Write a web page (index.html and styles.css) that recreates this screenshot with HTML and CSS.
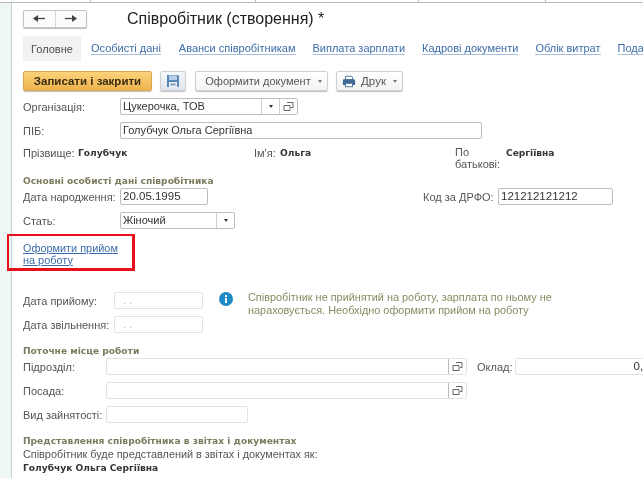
FILE: index.html
```html
<!DOCTYPE html>
<html lang="uk">
<head>
<meta charset="utf-8">
<title>Співробітник (створення)</title>
<link rel="stylesheet" href="styles.css">
</head>
<body>
<div class="top-strip"><i class="t1"></i><i class="t2"></i><i class="t3"></i><i class="t4"></i></div>
<div class="frame">
  <aside class="side"></aside>
  <main class="form">
    <header class="head">
      <div class="nav">
        <button class="nav-btn"><svg width="12" height="9" viewBox="0 0 12 9"><path d="M1 4.500h11" stroke="#444" stroke-width="1.300"/><path d="M0 4.500L5 1v7z" fill="#444"/></svg></button>
        <button class="nav-btn"><svg width="12" height="9" viewBox="0 0 12 9"><path d="M0 4.500h11" stroke="#444" stroke-width="1.300"/><path d="M12 4.500L7 1v7z" fill="#444"/></svg></button>
      </div>
      <h1 class="title">Співробітник (створення) *</h1>
    </header>
    <nav class="tabs">
      <span class="tab active">Головне</span>
      <a class="tab t-a">Особисті дані</a>
      <a class="tab t-b">Аванси співробітникам</a>
      <a class="tab t-c">Виплата зарплати</a>
      <a class="tab t-d">Кадрові документи</a>
      <a class="tab t-e">Облік витрат</a>
      <a class="tab">Подання</a>
    </nav>
    <div class="toolbar">
      <button class="btn primary">Записати і закрити</button>
      <button class="btn save"><svg width="14" height="14" viewBox="0 0 14 14"><path d="M1 1h11l1 1v11H1z" fill="#5a86b8"/><rect x="3" y="1.500" width="8" height="4.500" fill="#b9cfe6"/><rect x="3" y="8" width="8" height="5" fill="#e8eef4"/><rect x="4.500" y="9.500" width="5" height="2" fill="#7d9cbc"/></svg></button>
      <button class="btn doc">Оформити документ<span class="caret"></span></button>
      <button class="btn print"><svg width="14" height="13" viewBox="0 0 16 14"><path d="M4 1h7l1 1v3H4z" fill="#fff" stroke="#3e6a94"/><path d="M1 6q0-1.500 1.500-1.500h11Q15 4.500 15 6v5H1z" fill="#3e6a94"/><rect x="4" y="9" width="8" height="4" fill="#fff" stroke="#3e6a94"/></svg>Друк<span class="caret"></span></button>
    </div>

    <div class="row r-org">
      <label class="lbl w97">Організація:</label>
      <div class="field f-org"><span class="val">Цукерочка, ТОВ</span><span class="cell"><span class="caret dark"></span></span><span class="cell"><svg class="open" width="11" height="11" viewBox="0 0 11 11"><path d="M4 1.500h6v5H8M1 4.500h6v5H1z" fill="none" stroke="#666"/></svg></span></div>
    </div>
    <div class="row r-pib">
      <label class="lbl w97">ПІБ:</label>
      <div class="field f-pib"><span class="val">Голубчук Ольга Сергіївна</span></div>
    </div>
    <div class="names">
      <span class="lbl">Прізвище:</span><b class="bold">Голубчук</b>
      <span class="lbl">Ім'я:</span><b class="bold">Ольга</b>
      <span class="lbl n4">По батькові:</span><b class="bold">Сергіївна</b>
    </div>

    <h2 class="group g1">Основні особисті дані співробітника</h2>
    <div class="row r-birth">
      <label class="lbl w97">Дата народження:</label>
      <div class="field f-birth"><span class="val num">20.05.1995</span></div>
      <label class="lbl code">Код за ДРФО:</label>
      <div class="field f-code"><span class="val num">121212121212</span></div>
    </div>
    <div class="row r-sex">
      <label class="lbl w97">Стать:</label>
      <div class="field f-sex"><span class="val">Жіночий</span><span class="cell"><span class="caret dark"></span></span></div>
    </div>
    <div class="hire-box"><a class="hire">Оформити прийом<br>на роботу</a></div>

    <div class="dates">
      <div class="date-col">
        <div class="row"><label class="lbl w91">Дата прийому:</label><div class="field soft f-date"><span class="val dim">. .</span></div></div>
        <div class="row r-dis"><label class="lbl w91">Дата звільнення:</label><div class="field soft f-date"><span class="val dim">. .</span></div></div>
      </div>
      <svg class="info" width="14" height="14" viewBox="0 0 14 14"><circle cx="7" cy="7" r="7" fill="#1f8ac4"/><rect x="6" y="6" width="2" height="5" fill="#fff"/><rect x="6" y="3" width="2" height="2" fill="#fff"/></svg>
      <p class="note">Співробітник не прийнятий на роботу, зарплата по ньому не нараховується. Необхідно оформити прийом на роботу</p>
    </div>

    <h2 class="group g2">Поточне місце роботи</h2>
    <div class="row">
      <label class="lbl w83">Підрозділ:</label>
      <div class="field soft f-pos"><span class="val"></span><span class="cell soft-cell"><svg class="open" width="11" height="11" viewBox="0 0 11 11"><path d="M4 1.500h6v5H8M1 4.500h6v5H1z" fill="none" stroke="#666"/></svg></span></div>
      <label class="lbl salary">Оклад:</label>
      <div class="field soft f-sal"><span class="val right num">0,00</span></div>
    </div>
    <div class="row r-post">
      <label class="lbl w83">Посада:</label>
      <div class="field soft f-pos"><span class="val"></span><span class="cell soft-cell"><svg class="open" width="11" height="11" viewBox="0 0 11 11"><path d="M4 1.500h6v5H8M1 4.500h6v5H1z" fill="none" stroke="#666"/></svg></span></div>
    </div>
    <div class="row r-post">
      <label class="lbl w83">Вид зайнятості:</label>
      <div class="field soft f-emp"></div>
    </div>

    <h2 class="group g3">Представлення співробітника в звітах і документах</h2>
    <p class="lbl present">Співробітник буде представлений в звітах і документах як:</p>
    <b class="bold full">Голубчук Ольга Сергіївна</b>
  </main>
</div>
</body>
</html>
```
FILE: styles.css
```css
* { box-sizing: border-box; }
html, body { margin: 0; padding: 0; }
body {
  width: 643px;
  height: 478px;
  overflow: hidden;
  background: #fff;
  font-family: "Liberation Sans", Arial, sans-serif;
  font-size: 11px;
  color: #4a4a4a;
  filter: blur(0.35px);
}
button { font-family: inherit; padding: 0; margin: 0; }

.top-strip { height: 3px; border-bottom: 1px solid #b9b9b9; display: flex; }
.top-strip i { display: block; height: 3px; border-right: 1px solid #b9b9b9; }
.t1 { width: 91px; }
.t2 { width: 165px; }
.t3 { width: 163px; }
.t4 { width: 127px; }

.frame { display: flex; height: 475px; }
.side { width: 12px; flex: none; background: #eef6f6; border-right: 1px solid #c8d0d2; }
.form { flex: 1; min-width: 0; padding: 6px 0 0 11px; white-space: nowrap; }

.head { display: flex; align-items: center; height: 19px; }
.nav { display: flex; width: 64px; height: 18px; border: 1px solid #c4c4c4; border-radius: 2px; box-shadow: 0 1px 1px #bbb; background: #fbfbfb; }
.nav-btn { flex: 1; border: 0; background: none; display: flex; align-items: center; justify-content: center; }
.nav-btn + .nav-btn { border-left: 1px solid #d8d8d8; }
.title { margin: 0 0 0 40px; font-size: 16px; font-weight: 400; color: #222; line-height: 19px; }

.tabs { display: flex; align-items: center; height: 25px; margin-top: 8px; width: 640px; font-size: 11px; }
.tab { flex: none; color: #3e6ca8; border-bottom: 1px solid #a9bfdc; margin-right: 17px; line-height: 12px; }
.tab.active { width: 58px; height: 25px; margin-right: 10px; background: #f2f2f2; color: #4a4a4a; border: 0; display: flex; align-items: center; justify-content: center; }
.t-a { margin-right: 18px; }
.t-c { margin-right: 17px; }

.toolbar { display: flex; margin-top: 10px; height: 20px; }
.btn { height: 20px; border: 1px solid #cfcfcf; border-radius: 2px; background: linear-gradient(#fff, #f3f3f3); box-shadow: 0 1px 1px #c0c0c0; font-size: 11px; color: #555; display: flex; align-items: center; justify-content: center; }
.primary { width: 129px; margin-right: 8px; background: linear-gradient(#fbd27a, #eeb34e); border-color: #d9a650; color: #3a2c12; font-weight: 700; font-size: 11.500px; }
.save { width: 26px; margin-right: 9px; background: linear-gradient(#f4f7fa, #dfe6ee); }
.doc { width: 133px; margin-right: 8px; padding-left: 4px; }
.print { width: 67px; gap: 5px; font-size: 11.500px; }
.print .caret { margin-left: 2px; }
.caret { display: inline-block; width: 0; height: 0; margin-left: 7px; border: 2px solid transparent; border-top: 3px solid #777; border-bottom: 0; }
.caret.dark { margin: 0; border-top-color: #333; }

.row { display: flex; align-items: center; height: 17px; }
.r-org { margin-top: 7px; }
.r-pib { margin-top: 7px; }
.lbl { color: #555; font-size: 11px; margin: 0; flex: none; }
.w97 { width: 97px; }
.w91 { width: 91px; }
.w83 { width: 83px; }

.field { display: flex; align-items: stretch; height: 17px; background: #fff; border: 1px solid #bdbdbd; border-radius: 2px; flex: none; font-size: 11px; color: #333; overflow: hidden; }
.val { flex: 1; padding-left: 2px; line-height: 15px; }
.num { font-size: 11.500px; }
.right { text-align: right; }
.dim { color: #bbb; padding-left: 8px; }
.cell { width: 18px; border-left: 1px solid #cfcfcf; display: flex; align-items: center; justify-content: center; background: #fff; flex: none; }
.soft { border-color: #e3e3e3; }
.soft-cell { border-left-color: #bcbcbc; }
.f-org { width: 178px; }
.f-pib { width: 362px; }
.f-birth { width: 88px; }
.f-code { width: 115px; }
.f-sex { width: 115px; }
.f-date { width: 89px; }
.f-pos { width: 361px; }
.f-sal { width: 142px; }
.f-emp { width: 142px; }
.code { margin-left: 215px; width: 75px; }
.salary { margin-left: 10px; width: 38px; }

.names { display: grid; grid-template-columns: 55px 176px 26px 175px 51px auto; align-items: center; height: 14px; margin-top: 6px; line-height: 14px; }
.names .n4 { white-space: normal; line-height: 12px; align-self: start; margin-top: 1px; height: 14px; }
.bold { font-size: 9.100px; font-weight: 700; color: #333; font-family: "DejaVu Sans", sans-serif; }

.group { margin: 0; font-size: 9.100px; line-height: 12px; font-weight: 700; color: #7b7a5c; font-family: "DejaVu Sans", sans-serif; }
.g1 { margin-top: 16px; }
.r-birth { margin-top: 1px; }
.r-sex { margin-top: 7px; }

.hire-box { width: 128px; height: 37px; margin: 5px 0 0 -16px; padding: 7px 0 0 14px; border: 3px solid #e8101a; border-width: 2px 3px 3px 2px; font-size: 10.900px; line-height: 11.500px; }
.hire { color: #3b6cab; text-decoration: underline; }

.dates { display: flex; margin-top: 21px; align-items: flex-start; }
.date-col { width: 196px; flex: none; }
.r-dis { margin-top: 7px; }
.info { flex: none; }
.note { margin: -1px 0 0 15px; width: 320px; white-space: normal; color: #8a8a62; font-size: 10.900px; line-height: 12.500px; }

.g2 { margin-top: 12px; }
.g2 + .row { margin-top: 1px; }
.r-post { margin-top: 7px; }
.g3 { margin-top: 12px; }
.present { font-size: 10.850px; line-height: 13px; margin-top: 1px; }
.full { display: block; margin-top: 1px; line-height: 12px; }
```
